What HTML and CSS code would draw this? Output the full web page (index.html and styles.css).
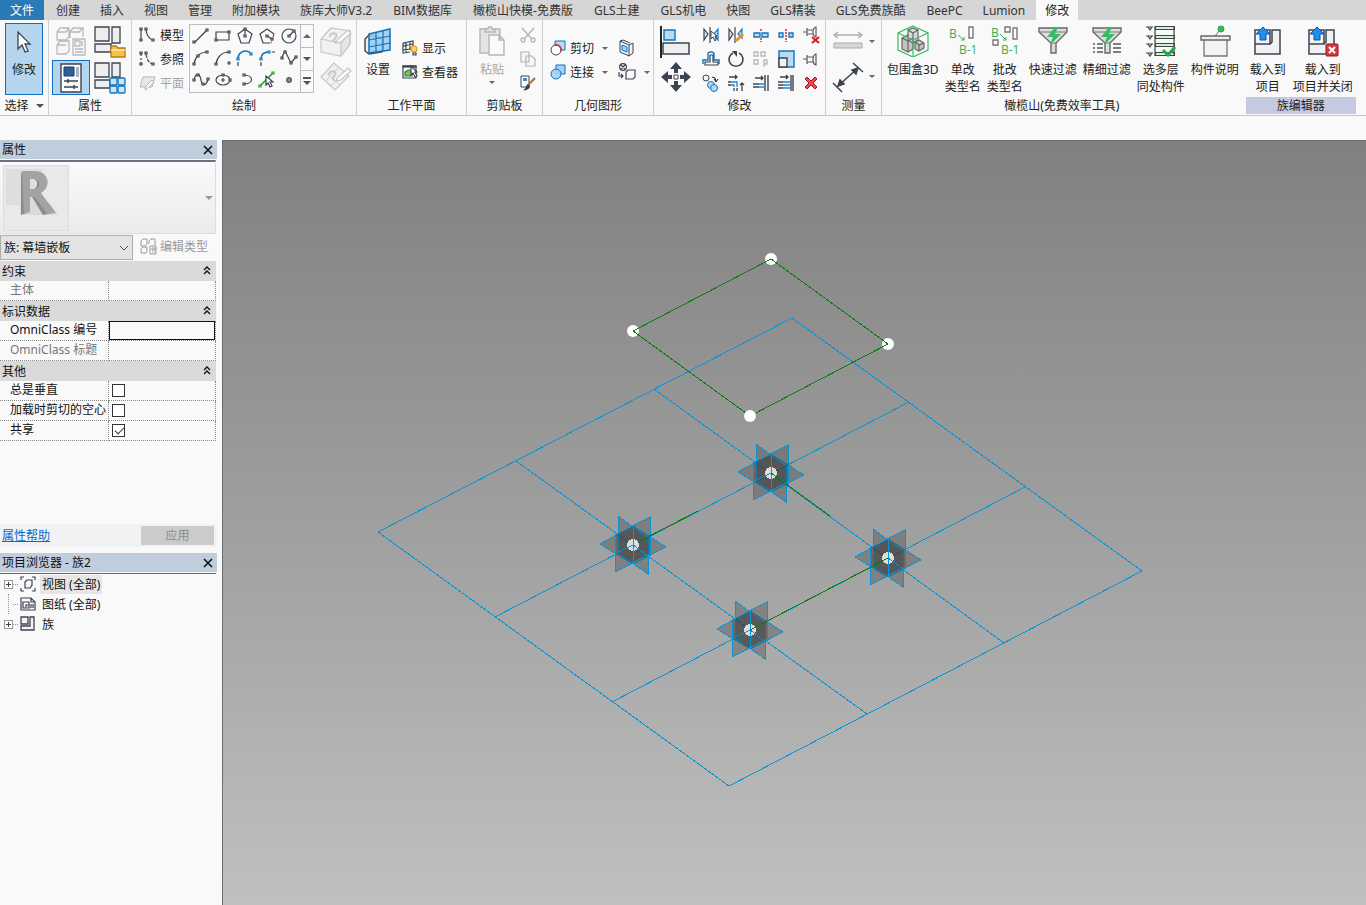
FILE: index.html
```html
<!DOCTYPE html>
<html lang="zh-CN">
<head>
<meta charset="utf-8">
<title>族2</title>
<link rel="stylesheet" href="styles.css">
</head>
<body>
<div class="app">
<nav class="tabs">
  <button class="tab file">文件</button><button class="tab">创建</button><button class="tab">插入</button><button class="tab">视图</button><button class="tab">管理</button><button class="tab">附加模块</button><button class="tab mixed">族库大师V3.2</button><button class="tab mixed">BIM数据库</button><button class="tab mixed">橄榄山快模-免费版</button><button class="tab mixed">GLS土建</button><button class="tab">GLS机电</button><button class="tab">快图</button><button class="tab">GLS精装</button><button class="tab mixed">GLS免费族酷</button><button class="tab">BeePC</button><button class="tab">Lumion</button><button class="tab current">修改</button>
</nav>

<header class="ribbon">
  <section class="panel p-select">
    <div class="body">
      <button class="big pressed">
        <svg width="32" height="32" viewBox="0 0 32 32"><path d="M10 6v17l4-4 3 7 3-1-3-7h5z" fill="#fff" stroke="#3c4350" stroke-width="1.3"/></svg>
        <span>修改</span>
      </button>
    </div>
    <button class="caption">选择 <i class="tri wide"></i></button>
  </section>

  <section class="panel p-props">
    <div class="body">
      <button class="tool" aria-label="类型属性"><svg width="32" height="32" viewBox="0 0 32 32" fill="#f6f6f6" stroke="#b9b9b9" stroke-width="1.3"><path d="M2 6l3-4h9v9l-3 3H2zM15 6l3-4h10v9M15 6v6M2 19l3-4h9v10l-3 3H2zM2 6h9l3-4M15 6h9l4-4M2 19h9"/><path d="M18 13h12v16H18z"/><path d="M20 15h5v5h-5zM27 15v5M20 23h8M20 26h8"/></svg></button>
      <button class="tool" aria-label="族类型和类别"><svg width="32" height="32" viewBox="0 0 32 32" stroke="#3c4350" stroke-width="1.3"><path d="M1 1h14v14H1zM18 1h8v16h-8zM1 18h16v8H1z" fill="#eceef0"/><path d="M17 20h5l2 2h7v9H17z" fill="#f5c244" stroke="#b87a10"/><path d="M17 24h14" stroke="#fff0b0"/></svg></button>
      <button class="tool on" aria-label="属性"><svg width="32" height="32" viewBox="0 0 32 32"><path d="M6 2h20v28H6z" fill="#fafbfc" stroke="#3c4350" stroke-width="1.4"/><path d="M9 5h10v9H9z" fill="#2b5f9b" stroke="#1d3f70"/><path d="M21 5h3v10h-3z" fill="#a9b6c4"/><path d="M9 19h14M9 25h14M13 17v4M19 23v4" stroke="#3c4350" stroke-width="1.5"/></svg></button>
      <button class="tool" aria-label="族类型"><svg width="32" height="32" viewBox="0 0 32 32" stroke="#3c4350" stroke-width="1.3"><path d="M1 1h14v14H1zM18 1h8v14h-8zM1 18h15v8H1z" fill="#eceef0"/><g fill="#c9e5fa" stroke="#1173bb"><rect x="16" y="16" width="7" height="7" rx="1"/><rect x="24" y="16" width="7" height="7" rx="1"/><rect x="16" y="24" width="7" height="7" rx="1"/><rect x="24" y="24" width="7" height="7" rx="1"/></g></svg></button>
    </div>
    <div class="caption">属性</div>
  </section>

  <section class="panel p-draw">
    <div class="body">
      <div class="stack rows">
        <button class="row"><svg width="18" height="18" viewBox="0 0 18 18" class="ln"><path d="M3 4v10M8 4c1 6 3 9 7 10"/><path class="nd" d="M2 2h2v2H2zM2 13h2v2H2zM7 2h2v2H7zM14 13h2v2h-2z"/></svg>模型</button>
        <button class="row"><svg width="18" height="18" viewBox="0 0 18 18" class="ln"><path d="M3 4v10" stroke-dasharray="2 2"/><path d="M8 4c1 6 3 9 7 10" stroke-dasharray="4 1"/><path class="nd" d="M2 2h2v2H2zM2 13h2v2H2zM7 2h2v2H7zM14 13h2v2h-2z"/></svg>参照</button>
        <button class="row off"><svg width="18" height="18" viewBox="0 0 18 18" fill="#e8e8e8" stroke="#b5b5b5"><path d="M5 3h12l-3 10H2z"/><path d="M7 16l1-4 6-6 2 2-6 6z" fill="#fafafa"/></svg>平面</button>
      </div>
      <div class="gallery">
        <div class="cells">
          <button aria-label="线"><svg width="18" height="18" viewBox="0 0 18 18" class="ln"><path d="M3 15L15 3"/><path class="nd" d="M1 14h2v2H1zM14 2h2v2h-2z"/></svg></button>
          <button aria-label="矩形"><svg width="18" height="18" viewBox="0 0 18 18" class="ln"><path d="M2 5h13v8H2z"/><path class="nd" d="M1 12h2v2H1zM14 4h2v2h-2z"/></svg></button>
          <button aria-label="内接多边形"><svg width="18" height="18" viewBox="0 0 18 18" class="ln"><path d="M9 2l7 5-3 9H5L2 7zM9 2v7"/><path class="nd" d="M8 1h2v2H8zM8 8h2v2H8z"/></svg></button>
          <button aria-label="外接多边形"><svg width="18" height="18" viewBox="0 0 18 18" class="ln"><path d="M9 2l7 5M12 16H5L2 7l7-5M9 9l5 3"/><path d="M16 7l-3 9" stroke="#e3222b" stroke-dasharray="3 1"/><path class="nd" d="M8 8h2v2H8zM13 11h2v2h-2z"/></svg></button>
          <button aria-label="圆形"><svg width="18" height="18" viewBox="0 0 18 18" class="ln"><circle cx="9" cy="9" r="7"/><path d="M9 9l4-4"/><path class="nd" d="M8 8h2v2H8zM13 3h2v2h-2z"/></svg></button>
          <button aria-label="起点-终点-半径弧"><svg width="18" height="18" viewBox="0 0 18 18" class="ln"><path d="M2 15C3 8 8 3 15 3"/><path class="nd" d="M1 14h2v2H1zM5 6h2v2H5zM14 2h2v2h-2z"/></svg></button>
          <button aria-label="圆心-端点弧"><svg width="18" height="18" viewBox="0 0 18 18" class="ln"><path d="M2 15C3 8 8 3 15 3M13 14h4M15 12v4"/><path class="nd" d="M1 14h2v2H1zM14 2h2v2h-2z"/></svg></button>
          <button aria-label="相切-端点弧"><svg width="18" height="18" viewBox="0 0 18 18" class="ln"><path d="M2 10C2 1 13 0 15 5" stroke="#1173bb" stroke-width="1.6"/><path class="nd" stroke="#1173bb" d="M1 9h2v2H1zM14 4h2v2h-2z"/><path d="M2 13v4"/></svg></button>
          <button aria-label="圆角弧"><svg width="18" height="18" viewBox="0 0 18 18" class="ln"><path d="M3 10c0-5 3-7 8-7" stroke="#1173bb" stroke-width="1.6"/><path class="nd" stroke="#1173bb" d="M2 9h2v2H2zM10 2h2v2h-2z"/><path d="M14 3h3M3 13v4"/></svg></button>
          <button aria-label="样条曲线"><svg width="18" height="18" viewBox="0 0 18 18" class="ln"><path d="M2 8l3-6 6 12 5-6"/><path class="nd" d="M1 8h2v2H1zM4 2h2v2H4zM10 13h2v2h-2zM15 7h2v2h-2z"/></svg></button>
          <button aria-label="通过点的样条曲线"><svg width="18" height="18" viewBox="0 0 18 18" class="ln"><path d="M2 9c2-9 6-6 7 0s5 7 7-1"/><path class="nd" d="M1 8h2v2H1zM5 3h2v2H5zM10 12h2v2h-2zM15 7h2v2h-2z"/></svg></button>
          <button aria-label="椭圆"><svg width="18" height="18" viewBox="0 0 18 18" class="ln"><ellipse cx="9" cy="9" rx="7" ry="5"/><path d="M7 9h4M9 7v4"/><path class="nd" d="M8 3h2v2H8zM15 8h2v2h-2z"/></svg></button>
          <button aria-label="半椭圆"><svg width="18" height="18" viewBox="0 0 18 18" class="ln"><path d="M8 4c10 0 10 9 0 9"/><path class="nd" d="M7 3h2v2H7zM7 12h2v2H7z"/></svg></button>
          <button aria-label="拾取线"><svg width="18" height="18" viewBox="0 0 18 18" class="ln"><path d="M2 15L15 2" stroke="#28a020" stroke-width="1.6"/><path class="nd" stroke="#28a020" d="M1 14h2v2H1zM14 1h2v2h-2z"/><path d="M8 5v9l2-2 2 4 2-1-2-4h3z" fill="#fff"/></svg></button>
          <button aria-label="点图元"><svg width="18" height="18" viewBox="0 0 18 18"><circle cx="9" cy="9" r="2.6" fill="#7d8590" stroke="#4d545e"/></svg></button>
        </div>
        <div class="scroll"><button aria-label="上"><i class="tri up"></i></button><button aria-label="下"><i class="tri"></i></button><button class="more" aria-label="更多"><i class="tri"></i></button></div>
      </div>
      <div class="planes">
        <button aria-label="在面上绘制"><svg width="32" height="32" viewBox="0 0 32 32" fill="#f1f1f1" stroke="#c6c6c6" stroke-width="1.2"><path d="M1 13L11 2l19 3v13l-9 12-20-4z"/><path d="M1 13l20 4v13l9-12V5l-9 12z" fill="#e6e6e6"/><path d="M10 11c-1-5 9-5 6 0-2 3-4 5 0 5" fill="none" stroke-width="1.8"/><path d="M16 17l2-4 10-9 3 3-10 9z" fill="#fcfcfc"/></svg></button>
        <button aria-label="在工作平面上绘制"><svg width="32" height="32" viewBox="0 0 32 32" fill="#f1f1f1" stroke="#c6c6c6" stroke-width="1.2"><path d="M1 16L14 2l15 13-14 14z"/><path d="M6 20L19 6M11 25l14-14M5 11l15 13" fill="none" stroke="#dadada"/><path d="M9 14c-1-5 9-5 6 0-2 3-4 5 0 5" fill="none" stroke-width="1.8"/><path d="M16 20l2-4 10-9 3 3-10 9z" fill="#fcfcfc"/></svg></button>
      </div>
    </div>
    <div class="caption">绘制</div>
  </section>

  <section class="panel p-work">
    <div class="body">
      <button class="big"><svg width="32" height="32" viewBox="0 0 32 32"><path d="M3 14l4-4 13 3v14l-13 2-4-3z" fill="#e9edf1" stroke="#3c4350" stroke-width="1.4"/><path d="M7 9l21-5v21L7 28z" fill="#9bcaf0" fill-opacity=".85" stroke="#1173bb" stroke-width="1.5"/><path d="M14 7v20M21 6v20M7 15l21-4M7 22l21-4" stroke="#1173bb" stroke-width="1.2"/></svg><span>设置</span></button>
      <div class="stack two">
        <button class="row"><svg width="16" height="16" viewBox="0 0 16 16" class="ln"><path d="M1 3l10-2v6M1 3v10l7-1M4 2v11M8 2v8M1 6l10-2M1 10l8-1"/><circle cx="12" cy="9" r="3" fill="#ffd35a" stroke="#eb9a1b"/><path d="M11 13h3v2h-3z"/></svg>显示</button>
        <button class="row"><svg width="16" height="16" viewBox="0 0 16 16" class="ln"><path d="M1 2h13v12H1z" fill="#fff"/><path d="M1 2h13v1H1z" fill="#3c4350"/><path d="M3 8l3-2h4v6H3z" fill="#7cbb6a" stroke="#28802a"/><path d="M9 2v9l2-2 2 4 2-1-2-4h2z" fill="#fff"/></svg>查看器</button>
      </div>
    </div>
    <div class="caption">工作平面</div>
  </section>

  <section class="panel p-clip">
    <div class="body">
      <button class="big off"><svg width="32" height="32" viewBox="0 0 32 32" fill="#e4e4e4" stroke="#b6b6b6" stroke-width="1.4"><path d="M4 4h20v24H4z"/><path d="M9 7V4h3c0-3 4-3 4 0h3v3z"/><path d="M13 10h10l5 5v15H13zM23 10v5h5" fill="#fafafa"/></svg><span>粘贴</span><i class="tri small"></i></button>
      <div class="stack">
        <button aria-label="剪切"><svg width="16" height="16" viewBox="0 0 16 16" fill="none" stroke="#b3b3b3" stroke-width="1.3"><path d="M2 1l9 10M14 1L5 11"/><circle cx="3" cy="13" r="2"/><circle cx="13" cy="13" r="2"/></svg></button>
        <button aria-label="复制"><svg width="16" height="16" viewBox="0 0 16 16" fill="#f7f7f7" stroke="#b3b3b3" stroke-width="1.2"><path d="M1 1h8v10H1zM6 5h6l3 3v7H6z"/></svg></button>
        <button aria-label="匹配类型"><svg width="16" height="16" viewBox="0 0 16 16"><path d="M1 1h8v11H1z" fill="#fff" stroke="#3c4350"/><path d="M3 3h4v3H3z" fill="#4c86bd"/><path d="M15 3L8 10" stroke="#ad7c3b" stroke-width="2.4"/><path d="M8 9l2 2c0 3-4 5-7 4 3-1 2-4 5-6z" fill="#3c4350"/></svg></button>
      </div>
    </div>
    <div class="caption">剪贴板</div>
  </section>

  <section class="panel p-geo">
    <div class="body">
      <div class="stack two">
        <button class="row"><svg width="16" height="16" viewBox="0 0 16 16"><path d="M5 1h10v9H5z" fill="#b6dbf5" stroke="#1173bb"/><circle cx="6" cy="10" r="5" fill="#fff" stroke="#3c4350"/><path d="M5 5a5 5 0 0 1 6 6" fill="none" stroke="#e3222b" stroke-width="1.5"/></svg>剪切 <i class="tri small"></i></button>
        <button class="row"><svg width="16" height="16" viewBox="0 0 16 16" fill="#a5d1f4" stroke="#1173bb"><path d="M6 1h9v9H6z"/><circle cx="6" cy="10" r="5" fill-opacity=".9"/></svg>连接 <i class="tri small"></i></button>
      </div>
      <div class="stack two">
        <button class="row" aria-label="洞口"><svg width="18" height="18" viewBox="0 0 18 18" fill="#f1f3f5" stroke="#3c4350"><path d="M2 2l9 4 4-2v10l-4 3-9-4zM11 6v11M2 2l3-1 7 3"/><path d="M4 6l5 2v5l-5-2z" fill="#a5d1f4" stroke="#1173bb"/></svg></button>
        <button class="row" aria-label="拆分面"><svg width="18" height="18" viewBox="0 0 18 18" fill="none" stroke="#3c4350" stroke-width="1.2"><circle cx="5" cy="4" r="3.4"/><path d="M3 2l4 4M7 2L3 6M1 9v4h4M3 11l2 2-2 2M8 9l2-2h7v7l-2 2H8z"/></svg><i class="tri small"></i></button>
      </div>
    </div>
    <div class="caption">几何图形</div>
  </section>

  <section class="panel p-modify">
    <div class="body">
      <div class="planes">
        <button aria-label="对齐"><svg width="32" height="32" viewBox="0 0 32 32"><path d="M1 0v32" stroke="#222" stroke-width="2"/><path d="M4 4h11v10H4z" fill="#b6dbf5" stroke="#1173bb" stroke-width="1.4"/><path d="M3 17h26v11H3z" fill="#eceef0" stroke="#3c4350" stroke-width="1.5"/></svg></button>
        <button aria-label="移动"><svg width="32" height="32" viewBox="0 0 32 32" fill="#3c4350"><path d="M16 1l6 7h-4v4h-4V8h-4zM16 31l6-7h-4v-4h-4v4h-4zM1 16l7-6v4h4v4H8v4zM31 16l-7-6v4h-4v4h4v4z"/><path d="M14 14h4v4h-4z" fill="#fff" stroke="#3c4350"/></svg></button>
      </div>
      <div class="grid15">
        <button aria-label="镜像拾取轴"><svg width="18" height="18" viewBox="0 0 18 18" class="ln"><path d="M2 3l4 5-4 6z" fill="#ddd"/><path d="M8 1v16"/><path d="M16 3l-4 5 4 6z" fill="#b6dbf5" stroke="#1173bb"/><path d="M9 5v8l2-2 2 4 1-1-1-4h2z" fill="#fff" stroke-width="1"/></svg></button>
        <button aria-label="镜像绘制轴"><svg width="18" height="18" viewBox="0 0 18 18" class="ln"><path d="M2 3l4 5-4 6z" fill="#ddd"/><path d="M8 1v16"/><path d="M15 3l-4 5 4 4z" fill="#b6dbf5" stroke="#1173bb"/><path d="M9 15l7-7" stroke="#e3942e" stroke-width="3"/></svg></button>
        <button aria-label="拆分图元"><svg width="18" height="18" viewBox="0 0 18 18"><path d="M2 7h6v4H2zM10 7h6v4h-6z" fill="#b6dbf5" stroke="#1173bb" stroke-width="1.3"/><path d="M9 3v3M9 12v4" stroke="#e3222b" stroke-width="1.5" stroke-dasharray="2 1"/></svg></button>
        <button aria-label="用间隙拆分"><svg width="18" height="18" viewBox="0 0 18 18"><path d="M2 7h4v4H2zM12 7h4v4h-4z" fill="#b6dbf5" stroke="#1173bb" stroke-width="1.3"/><path d="M9 3v13" stroke="#e3222b" stroke-width="1.5" stroke-dasharray="2 1"/></svg></button>
        <button aria-label="解锁"><svg width="18" height="18" viewBox="0 0 18 18"><path d="M1 6h4M5 2v8M5 4h6M5 8h6M14 1c-4 1-4 9 0 10z" fill="none" stroke="#555c68" stroke-width="1.2"/><path d="M10 11l7 6M17 11l-7 6" stroke="#d81f26" stroke-width="2.2"/></svg></button>
        <button aria-label="偏移"><svg width="18" height="18" viewBox="0 0 18 18" fill="none"><path d="M1 14v-4h5V4q0-2 3-2t3 2v6h5v4" stroke="#1173bb" stroke-width="1.4"/><path d="M3 15v-3h5V5h3v7h5v3z" stroke="#3c4350" stroke-width="1.2"/></svg></button>
        <button aria-label="旋转"><svg width="18" height="18" viewBox="0 0 18 18"><path d="M12 3a7 7 0 1 1-6 0" fill="none" stroke="#3c4350" stroke-width="1.6"/><path d="M5 1h5v6z" fill="#3c4350"/></svg></button>
        <button aria-label="阵列"><svg width="18" height="18" viewBox="0 0 18 18" fill="none" stroke="#b7b7b7" stroke-width="1.3"><path d="M2 2h4v4H2zM9 2h4v4H9zM2 10h4v4H2zM12 17v-7h3v4h-3"/></svg></button>
        <button aria-label="缩放"><svg width="18" height="18" viewBox="0 0 18 18"><path d="M2 1h15v16H2z" fill="#b6dbf5" stroke="#1173bb" stroke-width="1.4"/><path d="M2 8h8v9H2z" fill="#f1f1f1" stroke="#3c4350" stroke-width="1.4"/></svg></button>
        <button aria-label="锁定"><svg width="18" height="18" viewBox="0 0 18 18"><path d="M1 9h4M5 5v9M5 7h6M5 12h6M14 4c-4 1-4 10 0 11z" fill="none" stroke="#555c68" stroke-width="1.2"/></svg></button>
        <button aria-label="复制"><svg width="18" height="18" viewBox="0 0 18 18"><circle cx="4" cy="4" r="3" fill="#f5f5f5" stroke="#3c4350"/><path d="M10 3q4 0 4 4M12 5l2 3 2-3" fill="none" stroke="#222"/><g fill="#b6dbf5" stroke="#1173bb"><circle cx="9" cy="11" r="3.5"/><circle cx="12" cy="14" r="3.5"/></g></svg></button>
        <button aria-label="修剪为角"><svg width="18" height="18" viewBox="0 0 18 18" fill="none" stroke="#3c4350" stroke-width="1.3"><path d="M2 3h8M8 1l2 2-2 2M15 17V9M13 11l2-2 2 2M10 17v-3M1 8h3M1 11h3M7 17v-3"/><path d="M4 8h6v5M4 11h3v2" stroke="#1e86d2"/></svg></button>
        <button aria-label="修剪单个图元"><svg width="18" height="18" viewBox="0 0 18 18" fill="none" stroke="#3c4350" stroke-width="1.4"><path d="M3 4h8M9 2l2 2-2 2M13 1v16M16 1v16M1 10h6M1 13h6"/><path d="M7 10h5M7 13h5" stroke="#1e86d2"/></svg></button>
        <button aria-label="修剪多个图元"><svg width="18" height="18" viewBox="0 0 18 18" fill="none" stroke="#3c4350" stroke-width="1.4"><path d="M3 3h8M9 1l2 2-2 2M14 1v16M16 1v16M1 8h5M1 11h5M1 14h5"/><path d="M6 8h7M6 11h7M6 14h7" stroke="#1e86d2"/></svg></button>
        <button aria-label="删除"><svg width="18" height="18" viewBox="0 0 18 18"><path d="M5 3l4 4 4-4 2 2-4 4 4 4-2 2-4-4-4 4-2-2 4-4-4-4z" fill="#e9484c" stroke="#a8181c"/></svg></button>
      </div>
    </div>
    <div class="caption">修改</div>
  </section>

  <section class="panel p-measure">
    <div class="body">
      <div class="planes">
        <button aria-label="测量"><svg width="32" height="32" viewBox="0 0 32 32"><path d="M2 9h28M6 6L2 9l4 3M26 6l4 3-4 3" fill="none" stroke="#a9b5a6" stroke-width="1.5"/><path d="M2 17h28v5H2z" fill="#d7d7d7" stroke="#aaa"/></svg><i class="tri small"></i></button>
        <button aria-label="对齐尺寸标注"><svg width="32" height="32" viewBox="0 0 32 32" stroke="#3c4350" stroke-width="1.5"><path d="M6 25L26 7M1 22l9 9M21 2l10 9" fill="none"/><path d="M6 25l2-6 4 4zM26 7l-6 2 4 4z" fill="#3c4350"/></svg><i class="tri small"></i></button>
      </div>
    </div>
    <div class="caption">测量</div>
  </section>

  <section class="panel p-olive">
    <div class="body">
      <button class="big"><svg width="32" height="32" viewBox="0 0 32 32" stroke-width="1.2"><g stroke="#666"><path d="M5 13l6-3 5 3v11l-5 3-6-3z" fill="#c4c4c4"/><path d="M11 5l5-2 5 2v10l-5 3-5-3z" fill="#d8d8d8"/><path d="M18 17l4-2 5 3v5l-5 3-4-2z" fill="#c4c4c4"/><path d="M11 5l5 3 5-3M16 8v10M5 13l6 3 5-3M11 16v11M18 17l4 3 5-2M22 20v6" fill="none"/></g><path d="M16 1l15 7v17l-15 7L1 25V8zM16 32V15M1 8l15 7 15-7" fill="none" stroke="#35bd62"/></svg><span>包围盒3D</span></button>
      <button class="big"><svg width="32" height="32" viewBox="0 0 32 32"><text x="2" y="13" class="olive">B</text><text x="12" y="29" class="olive">B-1</text><path d="M11 10l6 5M17 12v3h-3" fill="none" stroke="#35ad50"/><path d="M22 2h4v11h-4z" fill="#fff" stroke="#777" stroke-width="1.4"/></svg><span>单改<br>类型名</span></button>
      <button class="big"><svg width="32" height="32" viewBox="0 0 32 32"><text x="2" y="12" class="olive">B</text><text x="12" y="29" class="olive">B-1</text><path d="M11 9l6 6M17 12v3h-3" fill="none" stroke="#35ad50"/><path d="M24 3h4v11h-4zM16 2h5v5h-5zM4 15h5v5H4z" fill="#fff" stroke="#777" stroke-width="1.4"/></svg><span>批改<br>类型名</span></button>
      <button class="big"><svg width="32" height="32" viewBox="0 0 32 32"><path d="M2 3h28v4L19 18v10h-5V18L2 7z" fill="#ddd" stroke="#686868" stroke-width="1.4"/><path d="M2 7h28M14 18h5" stroke="#777"/><path d="M18 2l-8 10h6l-3 8 11-11h-6l3-7z" fill="#35bd62"/></svg><span>快速过滤</span></button>
      <button class="big"><svg width="32" height="32" viewBox="0 0 32 32"><path d="M2 3h28v4L19 18v10h-5V18L2 7z" fill="#ddd" stroke="#686868" stroke-width="1.4"/><path d="M2 7h28M14 18h5" stroke="#777"/><path d="M18 2l-8 10h6l-3 8 11-11h-6l3-7z" fill="#35bd62"/><path d="M2 19h2M6 19h6M2 23h2M6 23h6M2 27h2M6 27h6M22 19h8M22 23h8M22 27h8" stroke="#555" stroke-width="1.4"/></svg><span>精细过滤</span></button>
      <button class="big"><svg width="32" height="32" viewBox="0 0 32 32" fill="none" stroke="#444" stroke-width="1.2"><path d="M10 3h20M10 12h20M10 20h20M10 29h20" stroke-width="4"/><path d="M11 3h18M11 12h18M11 20h18M11 29h18" stroke="#c9f5d2" stroke-width="2"/><path d="M10 1v30M29 1v30M1 2h7M1 11h7M1 19h7M1 28h7M3 2l2 3 2-3M3 11l2 3 2-3M3 19l2 3 2-3M3 28l2 3 2-3"/><path d="M18 25l5 5 7-8" stroke="#28a64c" stroke-width="3"/></svg><span>选多层<br>同处构件</span></button>
      <button class="big"><svg width="32" height="32" viewBox="0 0 32 32"><path d="M5 14h23v17H5z" fill="#f4f4f4" stroke="#777" stroke-width="1.3"/><path d="M2 11h29v4H2z" fill="#eee" stroke="#686868" stroke-width="1.4"/><path d="M16 11l5-6" stroke="#666"/><circle cx="22" cy="4" r="3" fill="#35bd62" stroke="#27a04b"/></svg><span>构件说明</span></button>
    </div>
    <div class="caption">橄榄山(免费效率工具)</div>
  </section>

  <section class="panel p-editor">
    <div class="body">
      <button class="big"><svg width="32" height="32" viewBox="0 0 32 32"><path d="M3 5h15v14H3zM20 5h8v24H3V19h15l2-2z" fill="#f0f1f3" stroke="#3c4350" stroke-width="1.5"/><path d="M11 2l7 7h-4v6H8V9H4z" fill="#1e90f0" stroke="#1057a5"/></svg><span>载入到<br>项目</span></button>
      <button class="big"><svg width="32" height="32" viewBox="0 0 32 32"><path d="M2 5h15v14H2zM19 5h8v24H2V19h15l2-2z" fill="#f0f1f3" stroke="#3c4350" stroke-width="1.5"/><path d="M10 2l7 7h-4v6H7V9H3z" fill="#1e90f0" stroke="#1057a5"/><rect x="19" y="19" width="12" height="12" rx="1" fill="#d8393c" stroke="#8f1517"/><path d="M22 22l6 6M28 22l-6 6" stroke="#fff" stroke-width="2"/></svg><span>载入到<br>项目并关闭</span></button>
    </div>
    <div class="caption">族编辑器</div>
  </section>
</header>

<div class="optionbar"></div>

<main class="work">
  <aside class="dock">
    <section class="properties">
      <div class="title"><h2>属性</h2><button class="close" aria-label="关闭属性"><svg width="10" height="10" viewBox="0 0 10 10"><path d="M1 1l8 8M9 1L1 9" stroke="#111" stroke-width="1.6"/></svg></button></div>
      <button class="type" aria-label="类型选择器">
        <span class="thumb"><svg width="64" height="64" viewBox="0 0 64 64"><path d="M2 3h36v36H2z" fill="#dedede"/><path d="M16 38h30l8 11H16z" fill="#d9d9d9"/><path d="M17 7l5-2v42l-5 2z" fill="#8c8c8c"/><path d="M18 5h13c14 0 17 16 6 22l15 20-8 1-13-17h-5v15l-6 2z" fill="#a3a3a3"/><path d="M26 13h4c7 0 7 10 0 10h-4z" fill="#dedede"/><path d="M30 13c5 2 4 8 0 10 7 0 7-10 0-10z" fill="#7f7f7f"/><path d="M28 31l11 18 5-1-13-17z" fill="#8c8c8c"/></svg></span>
        <i class="tri"></i>
      </button>
      <div class="family">
        <div class="pick"><select aria-label="族"><option>族: 幕墙嵌板</option></select><svg width="10" height="6" viewBox="0 0 10 6"><path d="M1 1l4 4 4-4" fill="none" stroke="#555"/></svg></div>
        <button class="edit"><svg width="18" height="18" viewBox="0 0 18 18" fill="none" stroke="#999"><path d="M2 4l2-2h4v5l-2 2H2zM10 7V4l2-2h4v6M2 12l2-2h4v5l-1 1H2zM11 9h6v8h-6zM13 11h3v2h-3zM13 15h1M15 15h1"/></svg>编辑类型</button>
      </div>
      <table class="params">
        <colgroup><col class="name"><col></colgroup>
        <tbody>
        <tr class="group"><th colspan="2"><span>约束</span><svg width="8" height="9" viewBox="0 0 8 9"><path d="M1 4l3-3 3 3M1 8l3-3 3 3"/></svg></th></tr>
        <tr class="dim"><td>主体</td><td></td></tr>
        <tr class="group"><th colspan="2"><span>标识数据</span><svg width="8" height="9" viewBox="0 0 8 9"><path d="M1 4l3-3 3 3M1 8l3-3 3 3"/></svg></th></tr>
        <tr><td><label for="num">OmniClass 编号</label></td><td><input type="text" id="num"></td></tr>
        <tr class="dim"><td>OmniClass 标题</td><td></td></tr>
        <tr class="group"><th colspan="2"><span>其他</span><svg width="8" height="9" viewBox="0 0 8 9"><path d="M1 4l3-3 3 3M1 8l3-3 3 3"/></svg></th></tr>
        <tr><td><label for="vert">总是垂直</label></td><td><input type="checkbox" id="vert"></td></tr>
        <tr><td><label for="void">加载时剪切的空心</label></td><td><input type="checkbox" id="void"></td></tr>
        <tr><td><label for="share">共享</label></td><td><input type="checkbox" id="share" checked></td></tr>
        </tbody>
      </table>
      <div class="foot"><a href="#help">属性帮助</a><button disabled>应用</button></div>
    </section>
    <section class="browser">
      <div class="title"><h2>项目浏览器 - 族2</h2><button class="close" aria-label="关闭项目浏览器"><svg width="10" height="10" viewBox="0 0 10 10"><path d="M1 1l8 8M9 1L1 9" stroke="#111" stroke-width="1.6"/></svg></button></div>
      <ul class="tree">
        <li><button class="twist" aria-label="展开视图"></button><i class="twig"></i><svg width="16" height="16" viewBox="0 0 16 16" fill="none" stroke="#3c4350" stroke-width="1.2"><path d="M1 4V1h3M12 1h3v3M15 12v3h-3M4 15H1v-3M5 6l2-2h5v5l-2 3H5z"/></svg><span class="sel">视图 (全部)</span></li>
        <li><i class="leaf"></i><i class="twig"></i><svg width="16" height="16" viewBox="0 0 16 16" fill="none" stroke="#3c4350" stroke-width="1.2"><path d="M1 2h10l4 4v8H1zM11 2v4h4M3 6h6v3H6v3H3zM9 9v3H7M11 8v4M13 8v4"/></svg><span>图纸 (全部)</span></li>
        <li><button class="twist" aria-label="展开族"></button><i class="twig"></i><svg width="16" height="16" viewBox="0 0 16 16" fill="#f4f4f4" stroke="#3c4350" stroke-width="1.3"><path d="M1 1h7v7H1zM10 1h4v13H1v-4h9z"/></svg><span>族</span></li>
      </ul>
    </section>
  </aside>

  <div class="canvas">
    <svg class="scene" viewBox="0 1 1143 764" preserveAspectRatio="xMidYMid meet">
      <defs>
        <g id="star">
          <g fill="#333" fill-opacity=".3" stroke="#0c93d2">
            <path d="M-33-1L0-19 33 2 0 19z"/>
            <path d="M-15-29L15-7V29L-15 8z"/>
            <path d="M-18-10L17-28V9L-18 27z"/>
          </g>
          <circle r="6" fill="#ddd" stroke="none"/>
          <path d="M0-19V19M0 0L-18 9M0 0L15 11" fill="none" stroke="#0c93d2"/>
        </g>
      </defs>
      <g fill="none" stroke="#0c93d2" shape-rendering="crispEdges">
        <path d="M155 392L569 178 919 431 506 646z"/>
        <path d="M293 321L644 574M431 249L781 503M272 477L686 262M389 562L802 347"/>
        <use href="#star" x="548" y="333"/>
        <use href="#star" x="410" y="405"/>
        <use href="#star" x="665" y="418"/>
        <use href="#star" x="527" y="490"/>
      </g>
      <g fill="#fff"><circle cx="548" cy="119" r="6"/><circle cx="410" cy="191" r="6"/><circle cx="665" cy="204" r="6"/></g>
      <g fill="none" stroke="#087d12" shape-rendering="crispEdges">
        <path d="M548 119L665 204 527 276 410 191z"/>
        <path d="M415 402L475 371M548 333L607 376M527 490L665 418"/>
      </g>
      <circle cx="527" cy="276" r="6" fill="#fff"/>
    </svg>
  </div>
</main>
</div>
</body>
</html>
```
FILE: styles.css
```css
* { box-sizing: border-box; }
body { margin: 0; }
.app {
  display: flex;
  flex-direction: column;
  min-height: 100vh;
  background: #f9f9f9;
  color: #222;
  font: 12px/17px "Noto Sans", "Noto Sans CJK SC", sans-serif;
}
button, select, input {
  margin: 0;
  padding: 0;
  border: 0;
  background: none;
  color: inherit;
  font: inherit;
}
svg { flex: none; display: block; }

/* tab strip */
.tabs { display: flex; height: 20px; background: #d6d6d6; white-space: nowrap; }
.tab { padding: 1px 10px 0; line-height: 19px; color: #333; }
.tab.file { background: #2a7ab8; color: #fff; margin-right: 2px; }
.tab.mixed { margin-right: 1px; }
.tab.current { background: #f9f9f9; color: #222; padding: 1px 9px 0; margin-left: 1px; }

/* ribbon */
.ribbon { display: flex; height: 96px; border-bottom: 1px solid #c6c6c6; white-space: nowrap; }
.panel { flex: none; display: flex; flex-direction: column; border-right: 1px solid #cfcfcf; }
.body { display: flex; height: 77px; }
.caption { height: 17px; text-align: center; }
.p-select { width: 49px; }
.p-props { width: 83px; }
.p-draw { width: 225px; }
.p-work { width: 110px; }
.p-clip { width: 76px; }
.p-geo { width: 111px; }
.p-modify { width: 172px; }
.p-measure { width: 56px; }
.p-olive { border: 0; }
.p-editor { border: 0; margin-left: 4px; }
.p-editor .caption { background: #c5cae2; }
.p-olive .body { padding-left: 2px; }
.p-editor .big { min-width: 44px; }

.big {
  display: flex;
  flex-direction: column;
  align-items: center;
  padding: 5px 3px 0;
}
.big span { margin-top: 4px; }
.pressed {
  width: 38px;
  height: 72px;
  margin: 3px 0 0 5px;
  padding-top: 2px;
  background: #b5d4ee;
  border: 1px solid #0f6fc5;
}
.pressed span { margin-top: 3px; }
.off { color: #a6a6a6; }

.tri {
  display: inline-block;
  border: solid transparent;
  border-width: 4px 4px 0;
  border-top-color: #555;
}
.tri.small { border-width: 3px 3px 0; border-top-color: #666; }
.tri.wide { margin: 0 0 2px 4px; }
.tri.up { border-width: 0 4px 4px; border-bottom-color: #666; }
.big .tri { margin-top: 3px; }

.p-props .body { display: grid; grid-template-columns: 38px 40px; grid-template-rows: 36px 35px; padding: 4px 0 0 3px; }
.tool { display: grid; place-items: center; }
.on { background: #b5d4ee; border: 1px solid #0f6fc5; }

.stack { display: grid; grid-auto-rows: 24px; align-content: start; padding-top: 3px; }
.stack.two { padding-top: 16px; }
.stack > button { display: flex; align-items: center; gap: 4px; }
.row .tri { margin-left: 4px; }
.rows { padding-left: 6px; width: 57px; }

.gallery { display: flex; width: 125px; height: 69px; margin-top: 4px; border: 1px solid #bdbdbd; }
.cells { display: grid; grid-template-columns: repeat(5, 22px); grid-template-rows: repeat(3, 22px); flex: 1; }
.cells button, .grid15 button { display: grid; place-items: center; }
.scroll { display: grid; grid-template-rows: repeat(3, 1fr); width: 13px; border-left: 1px solid #bdbdbd; }
.scroll button { display: grid; place-items: center; }
.scroll button + button { border-top: 1px solid #bdbdbd; }
.more::before { content: ""; width: 8px; height: 2px; background: #555; }
.scroll .more { align-content: center; gap: 2px; }
.ln { fill: none; stroke: #3c4350; stroke-width: 1.2; }
.nd { fill: #fff; }
.planes { display: grid; grid-auto-rows: 35px; align-content: start; padding: 4px 0 0 6px; }
.planes button { display: flex; align-items: center; }

.p-work .big { width: 42px; }
.p-work .stack { padding-left: 3px; }
.p-clip .big { width: 50px; }
.p-clip .stack { padding-left: 3px; }
.p-geo .body { padding-left: 7px; gap: 10px; }
.grid15 { display: grid; grid-template-columns: repeat(5, 25px); grid-template-rows: repeat(3, 24px); padding: 3px 0 0 6px; }
.p-measure button { gap: 5px; }
.olive { font: 12px "Open Sans", sans-serif; fill: #35ad50; }

.optionbar { height: 24px; }

/* work area */
.work { flex: 1; display: flex; }
.dock { width: 222px; flex: none; display: flex; flex-direction: column; color: #111; padding-right: 5px; }
.title {
  display: flex;
  align-items: center;
  justify-content: space-between;
  height: 19px;
  padding: 0 4px 0 2px;
  background: #bfcddc;
}
.title h2 { margin: 0; font-size: 12px; font-weight: 400; }
.close { display: grid; place-items: center; }
.properties { height: 413px; display: flex; flex-direction: column; }
.type {
  display: flex;
  align-items: center;
  justify-content: space-between;
  height: 74px;
  margin: 1px 1px 0 0;
  padding: 2px 2px 2px 3px;
  border: 1px solid #dcdcdc;
  border-width: 2px 1px 1px 0;
  border-top-color: #6d7080;
  background: linear-gradient(#fafafa, #eaebec);
}
.type .tri { border-top-color: #999; }
.thumb { border: 1px solid #dcdcdc; background: #e9e9e9; }
.family { display: flex; align-items: center; gap: 6px; height: 27px; }
.pick { display: flex; align-items: center; width: 133px; height: 25px; background: #e3e3e3; border: 1px solid #adadad; }
.pick select { appearance: none; flex: 1; padding-left: 3px; outline: 0; }
.pick svg { margin-right: 3px; }
.edit { display: flex; align-items: center; gap: 3px; padding-bottom: 3px; color: #999; }

.params { width: 216px; border-collapse: separate; border-spacing: 0; table-layout: fixed; }
.params .name { width: 109px; }
.params tr { height: 20px; }
.params td, .params th { height: 20px; padding: 0; line-height: 17px; white-space: nowrap; }
.params td { border: dotted #888; border-width: 0 1px 1px 0; overflow: hidden; }
.params td:first-child { padding: 0 0 2px 10px; }
.params th { background: #dadada; font-weight: 400; text-align: left; padding: 0 5px 0 2px; }
.params th svg { float: right; margin-top: 3px; fill: none; stroke: #111; stroke-width: 1.4; }
.dim { color: #777; }
.params input[type="text"] { display: block; width: 100%; height: 19px; padding: 0 3px; border: 1px solid #111; }
.params input[type="checkbox"] {
  appearance: none;
  display: block;
  width: 13px;
  height: 13px;
  margin-left: 3px;
  border: 1px solid #333;
  background: #fff;
}
.params input:checked::before {
  content: "";
  display: block;
  width: 8px;
  height: 4px;
  margin: 2px 0 0 2px;
  border: solid #333;
  border-width: 0 0 1px 1px;
  transform: rotate(-45deg);
}
.foot {
  display: flex;
  align-items: center;
  justify-content: space-between;
  height: 23px;
  margin: auto 0 6px;
  padding: 0 3px 0 2px;
  background: #f1f2f3;
}
.foot a { color: #0968cc; }
.foot button { width: 73px; height: 19px; background: #cbcbcb; color: #8c8c8c; }

.browser { flex: 1; }
.tree { margin: 1px 1px 0 0; padding: 0; border-top: 1px solid #666; list-style: none; }
.tree li { display: flex; align-items: center; height: 20px; padding-left: 4px; }
.tree svg { margin: 0 4px 0 2px; }
.tree span { padding: 1px 2px; }
.tree .sel { background: #e6e6e6; }
.twist {
  width: 9px;
  height: 9px;
  border: 1px solid #999;
  background: linear-gradient(#345, #345) center / 5px 1px no-repeat, linear-gradient(#345, #345) center / 1px 5px no-repeat, #fff;
}
.leaf { width: 5px; height: 20px; margin-right: 4px; border-right: 1px dotted #999; }
.twig { width: 5px; border-top: 1px dotted #999; }

.canvas {
  flex: 1;
  min-width: 0;
  display: flex;
  border: solid #686c74;
  border-width: 1px 0 0 1px;
  background: linear-gradient(#808080, #8e8e8e 22%, #9f9f9f 50%, #c0c0c0);
}
.scene { width: 100%; flex: 1; min-width: 0; }
```
